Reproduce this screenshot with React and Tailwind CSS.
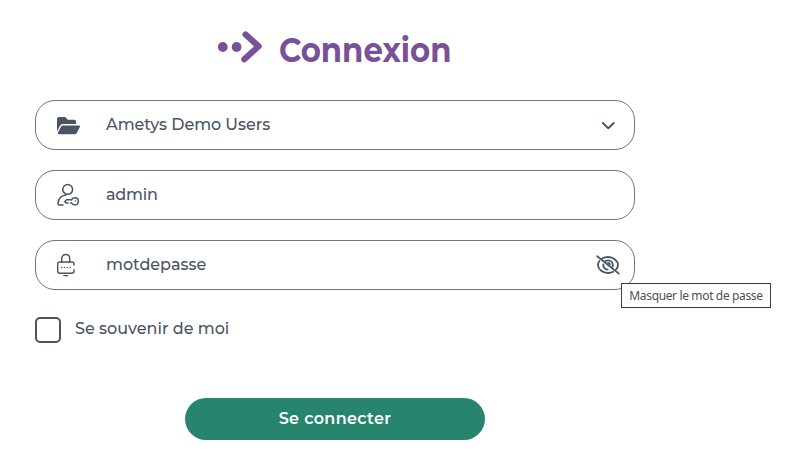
import React, { useState } from 'react';
import { FaFolderOpen } from 'react-icons/fa';

const UserIcon = () => (
  <svg className="w-[22px] h-[24px]" viewBox="0 0 22 24" fill="none" stroke="currentColor" strokeWidth="1.5" strokeLinecap="round">
    <circle cx="10.7" cy="6.4" r="4.9" />
    <path d="M6 22H2.2C1.2 22 .9 21.3 1 20.3C1.4 15.8 4.4 12.6 9 12" />
    <path d="M14.6 16.7H9.6L7.7 18.6L9.3 20H11" />
    <path d="M14.6 16.7C15.3 15.3 16.5 14.8 18 14.8C20.2 14.8 21.3 16.3 21.3 18.2C21.3 20.3 20 21.9 17.8 21.9C16.2 21.9 15.2 21.2 14.6 20H13.4" />
    <path d="M18.3 18h.1" />
  </svg>
);

const LockIcon = () => (
  <svg className="w-[19px] h-[24px]" viewBox="0 0 19 24" fill="none" stroke="currentColor" strokeWidth="1.4" strokeLinecap="round">
    <path d="M4.7 9V5.6C4.7 3.2 6.4 1.5 8.7 1.5S12.7 3.2 12.7 5.6V9" />
    <path d="M17 12V11C17 9.7 16.3 9 15 9H2.6C1.3 9 .7 9.7.7 11V18C.7 19.5 1.4 20.3 2.8 20.3H14.7C16.2 20.3 17 19.5 17 18V16.8" />
    <path d="M4.5 14.5h.1M7.3 14.5h.1M10.1 14.5h.1M12.9 14.5h.1M6.7 22.6h4" />
  </svg>
);

const EyeSlashIcon = () => (
  <svg className="w-[24px] h-[20px]" viewBox="0 0 24 20" fill="none" stroke="currentColor" strokeWidth="1.8" strokeLinecap="round">
    <path d="M1.2 1.2L22.8 18.6" />
    <path d="M6.2 3.6C8 2.5 9.9 2 12 2C17.5 2 22 6 22 10C22 11.6 21.2 13.2 20 14.5" />
    <path d="M3.4 6C2.5 7.2 2 8.6 2 10C2 14 6.5 18 12 18C13.8 18 15.6 17.6 17.1 16.8" />
    <path d="M9.4 6C10.2 5.5 11 5.3 12 5.3C14.7 5.3 16.8 7.3 16.8 10C16.8 10.6 16.7 11.2 16.5 11.7" />
    <path d="M7.3 9.4C7 12.4 9 14.6 11.8 14.6" />
    <path d="M12 7.8C13.2 7.8 13.9 8.7 13.8 9.6" />
  </svg>
);

const Field = ({ icon, children, action }) => (
  <div className="flex items-center h-[50px] w-[600px] rounded-[20px] border border-[#737378] pl-[21px]">
    <div className="w-[49px] shrink-0">{icon}</div>
    <div className="flex-1 pb-px">{children}</div>
    {action}
  </div>
);

const App = () => {
  const [login, setLogin] = useState('admin');
  const [password, setPassword] = useState('motdepasse');
  const [visible, setVisible] = useState(true);
  const [remember, setRemember] = useState(false);

  return (
    <div className="w-[795px] h-[467px] overflow-hidden bg-white pl-[35px] pt-[30px] text-[#4a5464] font-['Montserrat','Inter',sans-serif] text-[16px] font-medium">
      <form className="w-[600px]" onSubmit={(e) => e.preventDefault()}>
        <h1 className="flex items-start h-[70px] pl-[182px] text-[#795198]">
          <svg className="w-[46px] h-[34px]" viewBox="0 0 46 34" fill="none">
            <circle cx="5.8" cy="17" r="4.9" fill="currentColor" />
            <circle cx="19.6" cy="17" r="4.9" fill="currentColor" />
            <path d="M28.6 4.5L41.6 16.3L27.3 29.3" stroke="currentColor" strokeWidth="6.2" strokeLinecap="round" strokeLinejoin="round" />
          </svg>
          <span className="ml-[16px] mt-px text-[34px] leading-[38px] font-bold origin-left scale-x-[0.905]">Connexion</span>
        </h1>

        <div className="flex flex-col gap-5">
          <Field
            icon={<FaFolderOpen className="w-[23px] h-[23px]" preserveAspectRatio="none" />}
            action={
              <svg className="w-[14px] h-[9px] mr-[19px]" viewBox="0 0 14 9" fill="none" stroke="currentColor" strokeWidth="1.9" strokeLinecap="round" strokeLinejoin="round">
                <path d="M1.8 2L7.3 7.3L12.8 2" />
              </svg>
            }
          >
            <span className="tracking-[-0.05px]">Ametys Demo Users</span>
          </Field>
          <Field icon={<UserIcon />}>
            <input className="w-full outline-none tracking-[-0.2px]" value={login} onChange={(e) => setLogin(e.target.value)} />
          </Field>
          <div className="relative">
            <Field
              icon={<LockIcon />}
              action={
                <button type="button" className="mr-[14px]" onClick={() => setVisible(!visible)}>
                  <EyeSlashIcon />
                </button>
              }
            >
              <input
                className="w-full outline-none"
                type={visible ? 'text' : 'password'}
                value={password}
                onChange={(e) => setPassword(e.target.value)}
              />
            </Field>
            <div className="absolute left-[586px] top-[43px] w-[150px] h-[25px] flex items-center justify-center border border-[#3c3c3c] bg-white text-[#4f4f4f] font-['Noto_Sans',sans-serif] font-normal text-[12px] whitespace-nowrap tracking-[-0.36px]">
              Masquer le mot de passe
            </div>
          </div>
        </div>

        <label className="flex items-center mt-[27px] h-[26px]">
          <input
            type="checkbox"
            className="appearance-none w-[26px] h-[26px] rounded-[5px] border-2 border-[#4a5464] checked:bg-[#4a5464]"
            checked={remember}
            onChange={(e) => setRemember(e.target.checked)}
          />
          <span className="ml-[14px] pb-[3px]">Se souvenir de moi</span>
        </label>

        <button type="submit" className="block mx-auto mt-[55px] w-[300px] h-[42px] rounded-full bg-[#27856d] pb-px text-white font-semibold tracking-[0.35px]">
          Se connecter
        </button>
      </form>
    </div>
  );
};

export default App;
